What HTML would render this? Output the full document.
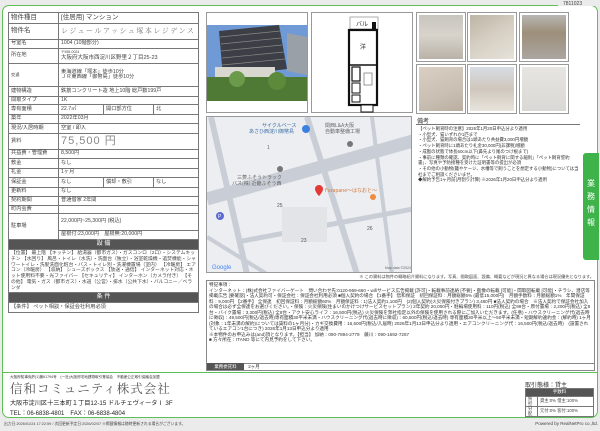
<!DOCTYPE html>
<html><head><meta charset="utf-8"><style>
*{margin:0;padding:0;box-sizing:border-box}
body{width:600px;height:431px;background:#ebebeb;font-family:"Liberation Sans","Noto Sans CJK JP",sans-serif;color:#333;position:relative;overflow:hidden}
.a{position:absolute}
.frame{position:absolute;left:2px;top:5px;width:596px;height:413px;background:#fff;border:1.2px solid #5fbf55;border-radius:7px}
table{border-collapse:collapse;position:absolute;font-size:5.2px;color:#444}
td{border:0.8px solid #777;padding:0 2px;line-height:1.05;vertical-align:middle}
td.l{width:50px}
.hd{background:#555;color:#fff;text-align:center;font-size:6px}
.sm{font-size:4.2px;line-height:1.35}
.ph{position:absolute;border:1px solid #999;background:#fff;padding:3px}
.ph div{width:100%;height:100%}
.t{font-size:4.4px;line-height:5.7px;color:#333}
</style></head><body>
<div class="frame"></div>
<div class="a" style="left:558px;top:0;width:40px;height:6px;background:#ebebeb"></div>
<div class="a" style="left:563px;top:1px;font-size:5px;color:#444">7811023</div>

<table style="left:8px;top:12px;width:191px">
<tr style="height:11px"><td class="l" style="font-size:6.5px">物件種目</td><td colspan="4" style="font-size:6.5px">[住居用] マンション</td></tr>
<tr style="height:16px"><td style="font-size:6.5px">物件名</td><td colspan="4" style="font-size:7px;color:#777;letter-spacing:1.5px;font-family:'Noto Serif CJK SC',serif">レジュールアッシュ塚本レジデンス</td></tr>
<tr style="height:9px"><td>号室名</td><td colspan="4">1004 (10階部分)</td></tr>
<tr style="height:15px"><td>所在地</td><td colspan="4"><span style="font-size:3.5px">〒555-0024</span><br><span style="font-size:5.5px">大阪府大阪市西淀川区野里２丁目25-23</span></td></tr>
<tr style="height:23px"><td class="sm">交通</td><td colspan="4">東海道線「塚本」徒歩10分<br>ＪＲ東西線「御幣島」徒歩10分</td></tr>
<tr style="height:10px"><td>建物構造</td><td colspan="4">鉄筋コンクリート造 地上10階 総戸数199戸</td></tr>
<tr style="height:8px"><td>間取タイプ</td><td colspan="4">1K</td></tr>
<tr style="height:10px"><td>専有面積</td><td style="width:45px">22.7㎡</td><td style="width:50px">開口部方位</td><td colspan="2">北</td></tr>
<tr style="height:9px"><td>築年</td><td colspan="4">2022年03月</td></tr>
<tr style="height:10px"><td>現況/入居時期</td><td colspan="4">空室 / 即入</td></tr>
<tr style="height:16px"><td>賃料</td><td colspan="4" style="font-size:11px;color:#888;letter-spacing:1px">75,500 円</td></tr>
<tr style="height:9px"><td>共益費・管理費</td><td colspan="4">8,500円</td></tr>
<tr style="height:10px"><td>敷金</td><td colspan="4">なし</td></tr>
<tr style="height:9px"><td>礼金</td><td colspan="4">1ヶ月</td></tr>
<tr style="height:10px"><td>保証金</td><td>なし</td><td>償却・敷引</td><td colspan="2">なし</td></tr>
<tr style="height:9px"><td>更新料</td><td colspan="4">なし</td></tr>
<tr style="height:9px"><td>契約期間</td><td colspan="4">普通借家 2年間</td></tr>
<tr style="height:8px"><td>町内会費</td><td colspan="4"></td></tr>
<tr style="height:17px"><td rowspan="2">駐車場</td><td colspan="4">22,000円~25,300円 (税込)</td></tr>
<tr style="height:9px"><td colspan="4">屋根付:23,000円　屋根無:20,000円</td></tr>
<tr style="height:10px"><td colspan="5" class="hd">設 備</td></tr>
<tr style="height:43px"><td colspan="5" style="font-size:4.8px;line-height:5.8px;vertical-align:top;padding-top:1px">【位置】 最上階 【キッチン】 給湯器（都市ガス）・ガスコンロ（2口）・システムキッチン 【水回り】 風呂・トイレ（水洗）・洗面台（独立）・浴室乾燥機・追焚機能・シャワートイレ・洗髪洗面化粧台・バス・トイレ別・洗濯機置場（室内） 【冷暖房】 エアコン（冷暖房） 【収納】 シューズボックス 【放送・通信】 インターネット対応・ネット使用料不要・光ファイバー 【セキュリティ】 インターホン（カメラ付き） 【その他】 電気・ガス（都市ガス）・水道（公営）・排水（公共下水）・バルコニー／ベランダ</td></tr>
<tr style="height:10px"><td colspan="5" class="hd">条 件</td></tr>
<tr style="height:10px"><td colspan="5">【条件】 ペット相談・保証会社利用必須</td></tr>
</table>

<div class="ph" style="left:206px;top:12px;width:102px;height:101px;padding:0">
<svg class="a" style="left:0;top:12px" width="100" height="76"><rect width="100" height="76" fill="#6f9ad6"/><polygon points="12,6 72,0 80,44 16,52" fill="#3c3f45"/><g stroke="#888" stroke-width="0.7"><line x1="13" y1="12" x2="73" y2="6"/><line x1="14" y1="19" x2="74" y2="13"/><line x1="14" y1="26" x2="75" y2="20"/><line x1="15" y1="33" x2="77" y2="27"/><line x1="15" y1="40" x2="78" y2="34"/></g><polygon points="80,8 100,12 100,50 80,46" fill="#9aa0a8"/><rect x="8" y="42" width="60" height="12" fill="#d8d8d0"/><rect x="0" y="52" width="100" height="24" fill="#4f7a35"/><circle cx="30" cy="54" r="8" fill="#6a9a4a"/><circle cx="70" cy="56" r="9" fill="#5a8a3a"/></svg>
</div>
<div class="ph" style="left:311px;top:12px;width:102px;height:101px">
<svg class="a" style="left:0;top:0" width="100" height="100">
<rect x="38" y="4" width="28" height="12" fill="#fff" stroke="#999" stroke-width="0.8"/><text x="44" y="13" font-size="6" fill="#222" font-family="Noto Sans CJK JP">バル</text>
<rect x="60" y="9" width="4" height="8" fill="#111"/>
<rect x="37" y="17" width="28" height="75" fill="#fff" stroke="#111" stroke-width="2.2"/>
<text x="48" y="36" font-size="6" fill="#222" font-family="Noto Sans CJK JP">洋</text>
<line x1="37" y1="52" x2="65" y2="52" stroke="#111" stroke-width="1.5"/>
<rect x="40" y="54" width="8" height="14" fill="#fff" stroke="#111" stroke-width="1.2"/>
<rect x="40" y="70" width="8" height="10" fill="#fff" stroke="#111" stroke-width="1"/>
<rect x="40" y="82" width="8" height="7" fill="#fff" stroke="#111" stroke-width="1"/>
<rect x="52" y="60" width="8" height="12" fill="#fff" stroke="#555" stroke-width="0.6"/>
<rect x="49" y="92" width="12" height="7" fill="#fff" stroke="#111" stroke-width="1"/>
</svg>
</div>
<div class="ph" style="left:416px;top:12px;width:50px;height:50px;padding:2px"><div style="background:linear-gradient(180deg,#c8c4be 0%,#d8d4cc 45%,#b9b2a8 100%)"></div></div>
<div class="ph" style="left:467px;top:12px;width:50px;height:50px;padding:2px"><div style="background:linear-gradient(150deg,#bdb5a5 0%,#d6cfc3 50%,#e6e2da 100%)"></div></div>
<div class="ph" style="left:519px;top:12px;width:50px;height:50px;padding:2px"><div style="background:linear-gradient(180deg,#b8b6b2 0%,#9d8f7a 40%,#aaa6a0 100%)"></div></div>
<div class="ph" style="left:416px;top:64px;width:50px;height:50px;padding:2px"><div style="background:linear-gradient(160deg,#d9cfc3 0%,#c9bfb3 60%,#b9aea0 100%)"></div></div>
<div class="ph" style="left:467px;top:64px;width:50px;height:50px;padding:2px"><div style="background:linear-gradient(180deg,#d8dde4 0%,#cfc7bc 50%,#e8e4dd 100%)"></div></div>
<div class="ph" style="left:519px;top:64px;width:50px;height:50px;padding:2px"><div style="background:linear-gradient(180deg,#e6e5e2 0%,#dad8d4 100%)"></div></div>

<div class="a" style="left:206px;top:116px;width:206px;height:157px;border:1px solid #999;background:#eceef1;overflow:hidden">
<svg width="206" height="157">
<g stroke="#c9ced6" fill="none">
<line x1="0" y1="82" x2="206" y2="24" stroke-width="13"/>
<line x1="4" y1="0" x2="40" y2="157" stroke-width="6"/>
<line x1="100" y1="0" x2="150" y2="157" stroke-width="6"/>
<line x1="30" y1="125" x2="206" y2="92" stroke-width="5"/>
<line x1="165" y1="0" x2="185" y2="157" stroke-width="4"/>
<line x1="0" y1="120" x2="60" y2="157" stroke-width="4"/>
</g>
<rect x="75" y="90" width="45" height="35" fill="#e2e4e8"/>
<text x="55" y="10" font-size="5" fill="#3a6ea5" font-family="Noto Sans CJK JP">サイクルベース</text>
<text x="42" y="16" font-size="5" fill="#3a6ea5" font-family="Noto Sans CJK JP">あさひ西淀川御幣島</text>
<circle cx="99" cy="12" r="4" fill="#3b82e0"/>
<text x="118" y="10" font-size="5" fill="#666" font-family="Noto Sans CJK JP">関西L&amp;A大阪</text>
<text x="118" y="16" font-size="5" fill="#666" font-family="Noto Sans CJK JP">自動車整備工場</text>
<circle cx="143" cy="27" r="3" fill="#777"/><circle cx="73" cy="52" r="3" fill="#777"/>
<text x="60" y="32" font-size="5" fill="#666">1</text>
<text x="30" y="62" font-size="5" fill="#666" font-family="Noto Sans CJK JP">三菱ふそうトラック</text>
<text x="25" y="68" font-size="5" fill="#666" font-family="Noto Sans CJK JP">バス(株) 近畿ふそう西</text>
<path d="M108 72a4 4 0 1 1 8 0c0 3-4 7-4 7s-4-4-4-7z" fill="#e53935"/>
<text x="118" y="75" font-size="5" fill="#d4763a" font-family="Noto Sans CJK JP">Furapane～はなおと～</text>
<circle cx="166" cy="80" r="3" fill="#f08a3c"/>
<text x="70" y="90" font-size="5" fill="#555">25</text>
<text x="160" y="113" font-size="5" fill="#555">26</text>
<text x="94" y="125" font-size="5" fill="#555">23</text>
<circle cx="13" cy="99" r="4" fill="#5a6ad0"/><text x="11" y="101" font-size="5" fill="#fff">P</text>
<text x="5" y="152" font-size="6" fill="#4285f4">Google</text>
<text x="178" y="152" font-size="3.5" fill="#666">Map data ©2024</text>
</svg>
</div>

<div class="a" style="left:416px;top:116px;width:164px;height:157px">
<div style="font-size:6px;color:#333;border-bottom:0.8px solid #777;padding-left:1px;height:9px">備考</div>
<div class="t" style="padding:1px 0 0 2px">【ペット飼育時の注意】2026年1月20日申込分より適用<br>・小型犬、猫いずれか1匹まで<br>・小型犬、猫飼育の場合は1頭あたり共益費3,000円増額<br>・ペット飼育時に1頭あたり礼金30,000円(非課税)増額<br>・成獣の状態で体長60cm以下(鼻先より尾のつけ根まで)<br>・事前に種類の確認、契約時に「ペット飼育に関する細則」「ペット飼育誓約書」、写真や予防接種を受けた証明書等の提出が必須<br>・その他の小動物(籠やケージ、水槽等で飼うことを想定する小動物)については当社までご相談くださいませ。<br>◆解約予告1ヶ月前(月割り計算) ※2026年1月20日申込分より適用</div>
</div>
<div class="a" style="left:583px;top:153px;width:16px;height:107px;background:#3db34a;border-radius:3px 0 0 3px;color:#fff;font-size:8px;line-height:13px;text-align:center;padding-top:24px;font-family:'Noto Sans CJK JP',sans-serif">業<br>務<br>情<br>報</div>

<div class="a" style="right:6px;top:274px;font-size:4.2px;color:#444">※ この資料は物件の概略紹介資料になります。写真、間取図面、設備、概要などが現況と異なる場合は現況優先となります。</div>

<div class="a" style="left:206px;top:280px;width:389px;height:84px;border:1px solid #888">
<div class="t" style="font-size:4.6px;line-height:5.5px;padding:1px 2px">特記事項：<br>インターネット：(株)式会社ファイバーゲート　問い合わせ先:0120-969-660・wifiサービス広告掲載 [許可]・転載事前連絡 [不要]・画像の転載 [可能]・間取図転載 [可能]・チラシ、潜店等掲載広告 [要確認]・法人契約可・保証会社：保証会社利用必須 ■個人契約の場合 【1番手】 信和保証　初回保証料：月額総額6% (最低15,000円)　月額手数料：月額総額1%　年間保証料：9,000円 【2番手】 全保連　初回保証料：月額総額60%　月額保証料：1)法人契約1,100円　(2)個人契約(火災保険付きプラン) 3,480円 ■法人契約の場合　※法人契約で保証会社加入の場合は必ず全保連をお選びください。・保険：火災保険(住まいのかけつけサービスセットプラン) 2年契約 20,000円・駐輪場使用料：110円(税込) 全99台・原付置場：2,200円(税込) 全8台・バイク置場：3,300円(税込) 全8台・アクト安心ライフ：16,500円(税込) 火災保険を弊社指定以外の保険を使用される際にご加入いただきます。(任意)・ハウスクリーニング代(退去時に徴収)：49,500円(税込/退去時)専有面積30平米未満・ハウスクリーニング代(退去時に徴収)：60,500円(税込/退去時) 専有面積30平米以上～50平米未満・短期解約違約金：(解約時) 1ヶ月(対象：1年未満の解約)については賃料の1ヶ月分)・カギ交換費用：16,500円(税込/入居時) 2026年1月13日申込分より適用・エアコンクリーニング代：16,500円(税込/退去時)　(設置されているエアコン1台につき) 2026年1月13日申込分より適用<br>※本物件のお申込みは(and)頂となります。【担当】 加納：090-7894-2779　藤川：090-1692-7267<br>■ 方々所在：ITAND 等にて内見予約をして下さい。</div>
</div>
<div class="a" style="left:206px;top:363px;width:389px;height:8px;border:1px solid #888;border-top:none;font-size:4.5px;line-height:7px">
<span style="display:inline-block;width:37px;height:7px;background:#555;color:#fff;text-align:center">業務委託料</span> <span style="padding-left:3px">2ヶ月</span></div>

<div class="a" style="left:2px;top:372px;width:596px;height:1.2px;background:#5fbf55"></div>

<div class="a" style="left:10px;top:375px;font-size:3.6px;color:#333">大阪府知事免許(1)第61794号　(一社)大阪府宅地建物取引業協会　不動産公正取引協議会加盟</div>
<div class="a" style="left:10px;top:379px;font-size:12.5px;color:#555;letter-spacing:1px;font-family:'Noto Serif CJK SC',serif">信和コミュニティ株式会社</div>
<div class="a" style="left:10px;top:398px;font-size:6.2px;color:#222">大阪市淀川区十三本町１丁目12-15 ドルチェヴィータⅠ 3F</div>
<div class="a" style="left:10px;top:408px;font-size:6px;color:#222">TEL：06-6838-4801　FAX：06-6838-4804</div>

<div class="a" style="left:525px;top:380px;font-size:6px;color:#333">取引態様：貸主</div>
<table style="left:525px;top:388px;width:69px;font-size:4.3px">
<tr style="height:8px"><td colspan="2" class="hd" style="font-size:4.5px">手数料</td></tr>
<tr style="height:9px"><td style="width:12px">負担</td><td>貸主:0% 借主:100%</td></tr>
<tr style="height:9px"><td>分配</td><td>元付:0% 客付:100%</td></tr>
</table>

<div class="a" style="left:4px;top:422px;font-size:3.8px;color:#444">出力日:2026/01/24 17:22:59 / 次回更新予定日:2026/02/07 ※掲載情報は随時更新される場合がございます。</div>
<div class="a" style="right:2px;top:421px;font-size:4.5px;color:#444">Powered by RealNetPro co.,ltd.</div>
</body></html>
